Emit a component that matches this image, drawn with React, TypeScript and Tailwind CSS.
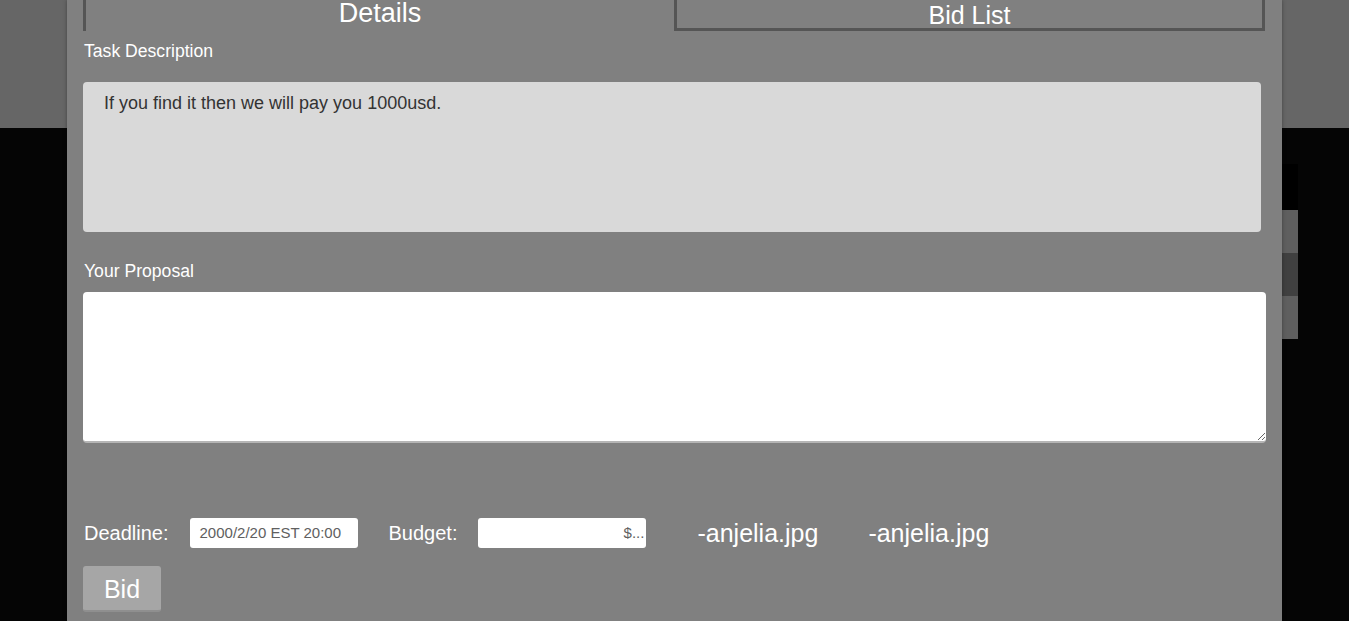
import React from "react";

export default function App() {
  const font = { fontFamily: '"Liberation Sans", Arial, sans-serif' };
  return (
    <div className="relative h-[621px] w-full overflow-hidden bg-[#050505]" style={font}>
      {/* background page */}
      <div className="h-[128px] bg-[#666666]" />
      <div className="flex justify-end pr-[51px] pt-[36px]">
        <div className="flex w-[1100px] flex-col">
          <div className="h-[46px] bg-[#000000]" />
          <div className="h-[43px] bg-[#5f5f5f]" />
          <div className="h-[43px] bg-[#404040]" />
          <div className="h-[43px] bg-[#5f5f5f]" />
        </div>
      </div>

      {/* modal */}
      <div className="absolute left-[67px] top-0 h-full w-[1215px] bg-[#808080] px-4 shadow-[0_0_4px_rgba(0,0,0,0.35)]">
        {/* tabs */}
        <div className="flex h-[31px]">
          <div className="flex h-full w-[591px] items-end justify-center border-l-[3px] border-[#555555] pb-[4px] text-[27px] leading-none text-white">
            Details
          </div>
          <div className="mr-[1px] box-border flex h-full w-[591px] items-end justify-center border-x-[3px] border-b-[3px] border-[#555555] pb-0 text-[25px] leading-none text-white">
            Bid List
          </div>
        </div>

        <div className="ml-[1px] mt-[10px] text-[17.6px] leading-[20px] text-white">Task Description</div>
        <div className="mt-[21px] h-[150px] w-[1178px] rounded-[4px] bg-[#d9d9d9] px-[21px] pt-[11px] text-[18px] leading-[21px] text-[#333333]">
          If you find it then we will pay you 1000usd.
        </div>

        <div className="ml-[1px] mt-[29px] text-[17.6px] leading-[20px] text-white">Your Proposal</div>
        <textarea
          className="mt-[11px] block h-[151px] w-full rounded-[4px] border-0 border-b-2 border-[#b5b5b5] bg-white p-2 text-[16px] outline-none"
          style={font}
        />

        <div className="mt-[75px] flex h-[30px] items-center">
          <span className="ml-[1px] mr-[21px] text-[20px] leading-none text-white">Deadline:</span>
          <div className="mr-[31px] flex h-[30px] w-[168px] items-center rounded-[3px] bg-white pl-[10px] text-[15px] text-[#606060]">
            2000/2/20 EST 20:00
          </div>
          <span className="mr-[21px] text-[20px] leading-none text-white">Budget:</span>
          <div className="flex h-[30px] w-[168px] items-center justify-end rounded-[3px] bg-white pr-[2px] text-[15px] text-[#606060]">
            $...
          </div>
          <span className="ml-[51px] text-[25px] leading-none text-white">-anjelia.jpg</span>
          <span className="ml-[50px] text-[25px] leading-none text-white">-anjelia.jpg</span>
        </div>

        <button
          className="mt-[18px] flex h-[46px] w-[78px] items-center justify-center rounded-[3px] border-b-2 border-[#8f8f8f] bg-[#a6a6a6] pt-[2px] text-[25px] leading-none text-white"
          style={font}
        >
          Bid
        </button>
      </div>
    </div>
  );
}
